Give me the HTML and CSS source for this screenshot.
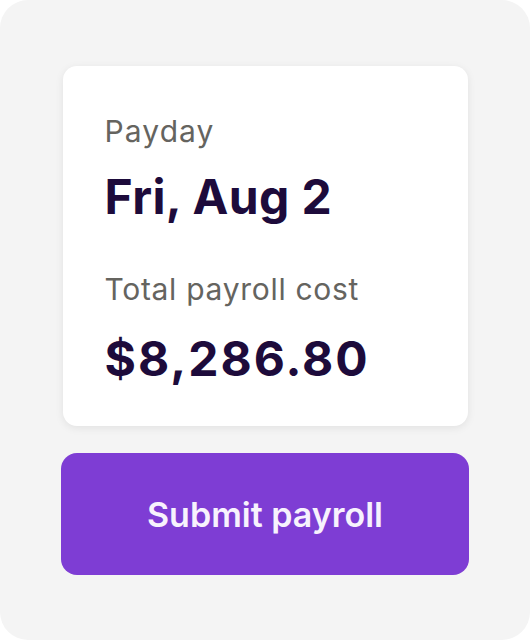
FILE: index.html
```html
<!DOCTYPE html>
<html lang="en">

<head>
	<meta charset="UTF-8">
	<meta name="viewport" content="width=device-width, initial-scale=1.0">
	<title>Payroll</title>
	<link rel="stylesheet" href="styles.css">
</head>

<body>
	<div class="panel">
		<section class="summary">
			<p class="label">Payday</p>
			<p class="value">Fri, Aug 2</p>
			<p class="label label-cost">Total payroll cost</p>
			<p class="value value-cost">$8,286.80</p>
		</section>
		<button class="submit">Submit payroll</button>
	</div>
</body>

</html>
```

FILE: styles.css
```css
html,
body {
	margin: 0;
	background: #fff;
}

body {
	font-family: Inter, "Liberation Sans", sans-serif;
}

.panel {
	width: 530px;
	height: 640px;
	box-sizing: border-box;
	background: #f4f4f4;
	border-radius: 28px;
	padding-top: 66px;
	display: flex;
	flex-direction: column;
	align-items: center;
	gap: 27px;
}

.summary {
	width: 405px;
	height: 360px;
	box-sizing: border-box;
	background: #fff;
	border-radius: 14px;
	box-shadow: 0 2px 8px rgba(0, 0, 0, 0.08);
	padding: 47px 42px 0;
}

.summary p {
	margin: 0;
}

.label {
	font-size: 30px;
	line-height: 36px;
	color: #65645f;
	letter-spacing: 1.1px;
}

.summary .value {
	font-size: 48px;
	line-height: 56px;
	font-weight: 700;
	color: #1d0b3b;
	letter-spacing: 0.4px;
	margin-top: 20px;
}

.summary .label-cost {
	letter-spacing: 0.7px;
	margin-top: 46px;
}

.summary .value-cost {
	letter-spacing: 2px;
	margin-top: 24px;
}

.submit {
	width: 408px;
	height: 122px;
	border: 0;
	border-radius: 16px;
	background: #7e3dd4;
	color: #f7f2fd;
	font-family: inherit;
	font-size: 34px;
	font-weight: 600;
	cursor: pointer;
}
```
